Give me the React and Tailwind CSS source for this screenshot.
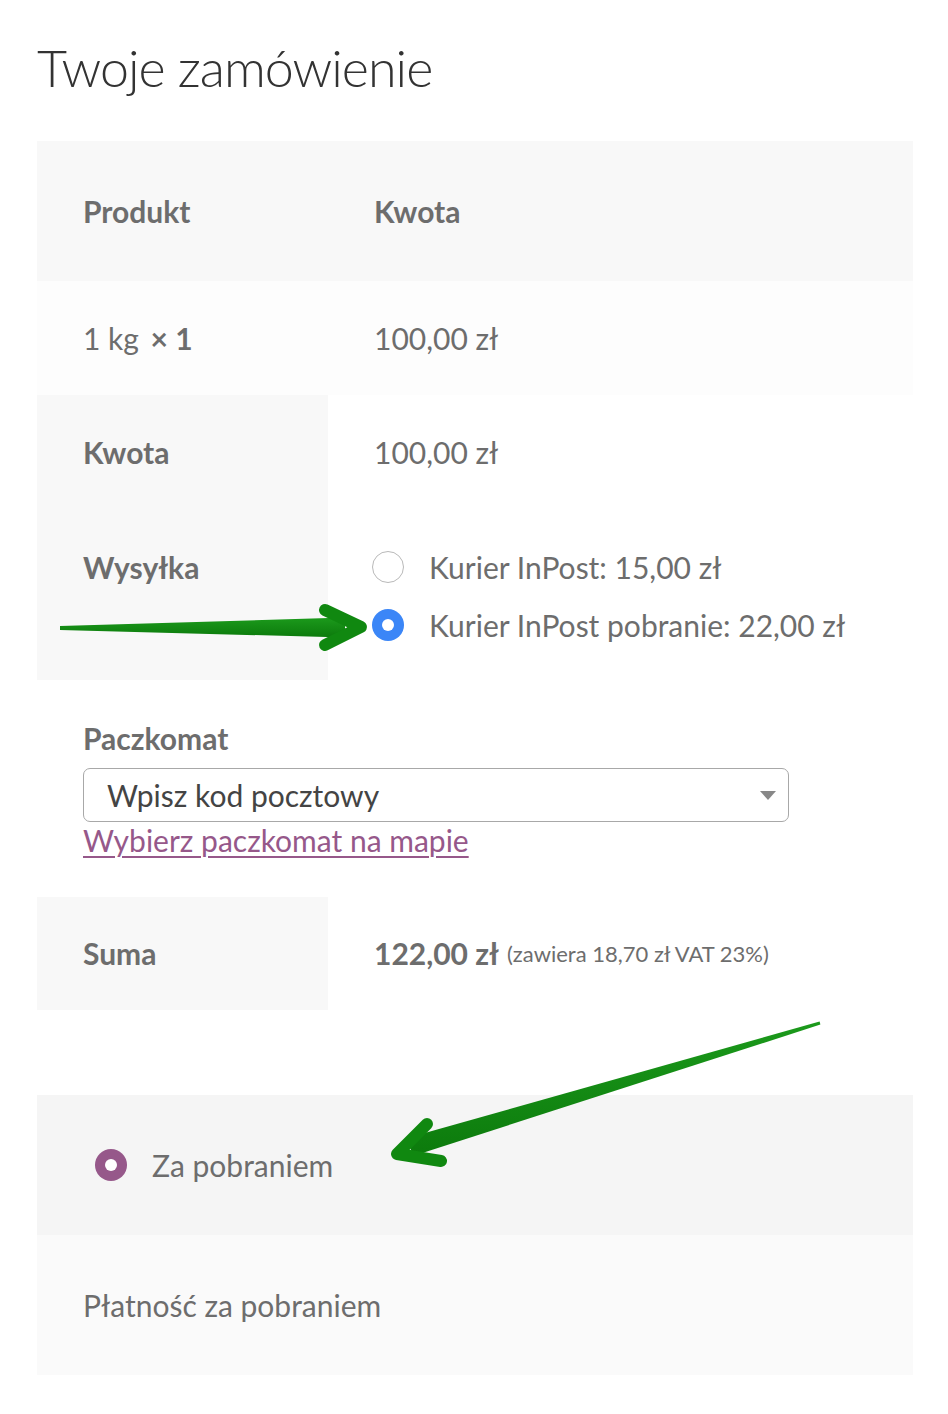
import React from 'react';

// Order review: WooCommerce-like checkout summary with two annotation arrows.

const FONT = { fontFamily: 'Lato, "Noto Sans", sans-serif' };

function Radio( { checked, color = 'blue' } ) {
	if ( ! checked ) {
		return (
			<span className="inline-block h-[32px] w-[32px] shrink-0 rounded-full border-[1.5px] border-[#b9b9b9] bg-white" />
		);
	}
	const ring = color === 'purple' ? 'bg-[#96588a]' : 'bg-[#3b86f7]';
	return (
		<span
			className={ `flex h-[32px] w-[32px] shrink-0 items-center justify-center rounded-full ${ ring }` }
		>
			<span className="h-[12px] w-[12px] rounded-full bg-white" />
		</span>
	);
}

function Arrows() {
	return (
		<svg
			className="pointer-events-none absolute left-0 top-0"
			width="948"
			height="1414"
			viewBox="0 0 948 1414"
		>
			<defs>
				<linearGradient id="g1" x1="0" y1="0" x2="0" y2="1">
					<stop offset="0" stopColor="#1c9a1c" />
					<stop offset="1" stopColor="#0c7a0c" />
				</linearGradient>
			</defs>
			{ /* arrow pointing at the COD shipping radio */ }
			<polygon
				points="60,626 60,630 345,637.5 345,617.5"
				fill="url(#g1)"
			/>
			<polyline
				points="325,610 361,627 325,645"
				fill="none"
				stroke="#108810"
				strokeWidth="12"
				strokeLinecap="round"
				strokeLinejoin="round"
			/>
			{ /* arrow pointing at the COD payment method */ }
			<polygon
				points="819.6,1021.6 820.4,1024.6 413,1156 407,1138"
				fill="url(#g1)"
			/>
			<polyline
				points="427,1124 397,1154 441,1161"
				fill="none"
				stroke="#108810"
				strokeWidth="12"
				strokeLinecap="round"
				strokeLinejoin="round"
			/>
		</svg>
	);
}

export default function App() {
	return (
		<div
			className="relative h-[1414px] w-[948px] bg-white text-[30px] text-[#6d6d6d]"
			style={ FONT }
		>
			<div className="flex h-[141px] items-start pl-[37px] pt-[31px]">
				<h2 className="text-[52px] font-light leading-[72px] tracking-[-1px] text-[#333]">
					Twoje zamówienie
				</h2>
			</div>

			<div className="ml-[37px] w-[876px]">
				<div className="flex h-[140px] items-center bg-[#f8f8f8] font-bold">
					<div className="w-[291px] pl-[46px]">Produkt</div>
					<div className="pl-[46px]">Kwota</div>
				</div>

				<div className="flex h-[114px] items-center bg-[#fdfdfd]">
					<div className="w-[291px] pl-[46px]">
						1 kg <span className="ml-1 font-bold">× 1</span>
					</div>
					<div className="pl-[46px]">100,00 zł</div>
				</div>

				<div className="flex h-[115px]">
					<div className="flex w-[291px] items-center bg-[#f8f8f8] pl-[46px] font-bold">
						Kwota
					</div>
					<div className="flex items-center pl-[46px]">100,00 zł</div>
				</div>

				<div className="flex h-[170px]">
					<div className="w-[291px] bg-[#f8f8f8] pl-[46px] pt-[28px] font-bold leading-[58px]">
						Wysyłka
					</div>
					<ul className="pl-[44px] pt-[28px] leading-[58px]">
						<li className="flex items-center gap-[25px]">
							<Radio />
							<span>Kurier InPost: 15,00 zł</span>
						</li>
						<li className="flex items-center gap-[25px]">
							<Radio checked />
							<span>Kurier InPost pobranie: 22,00 zł</span>
						</li>
					</ul>
				</div>

				<div className="h-[217px] pl-[46px] pt-[40px]">
					<div className="font-bold leading-[36px]">Paczkomat</div>
					<div className="mt-[12px] flex h-[54px] w-[706px] items-center justify-between rounded-[7px] border-[1.5px] border-[#a8a8a8] pl-[23px] pr-[12px] text-[#444]">
						<span>Wpisz kod pocztowy</span>
						<span className="h-0 w-0 border-x-[8px] border-t-[9px] border-x-transparent border-t-[#888]" />
					</div>
					<a
						href="#"
						className="block leading-[36px] text-[#96588a] underline decoration-[1.5px] underline-offset-[4px]"
					>
						Wybierz paczkomat na mapie
					</a>
				</div>

				<div className="flex h-[113px]">
					<div className="flex w-[291px] items-center bg-[#f8f8f8] pl-[46px] font-bold">
						Suma
					</div>
					<div className="flex items-center pl-[46px]">
						<span className="font-bold">122,00 zł</span>
						<span className="ml-[8px] text-[22px]">
							(zawiera 18,70 zł VAT 23%)
						</span>
					</div>
				</div>

				<div className="mt-[85px]">
					<div className="flex h-[140px] items-center gap-[25px] bg-[#f5f5f5] pl-[58px]">
						<Radio checked color="purple" />
						<span>Za pobraniem</span>
					</div>
					<div className="flex h-[140px] items-center bg-[#fafafa] pl-[46px]">
						Płatność za pobraniem
					</div>
				</div>
			</div>

			<Arrows />
		</div>
	);
}
